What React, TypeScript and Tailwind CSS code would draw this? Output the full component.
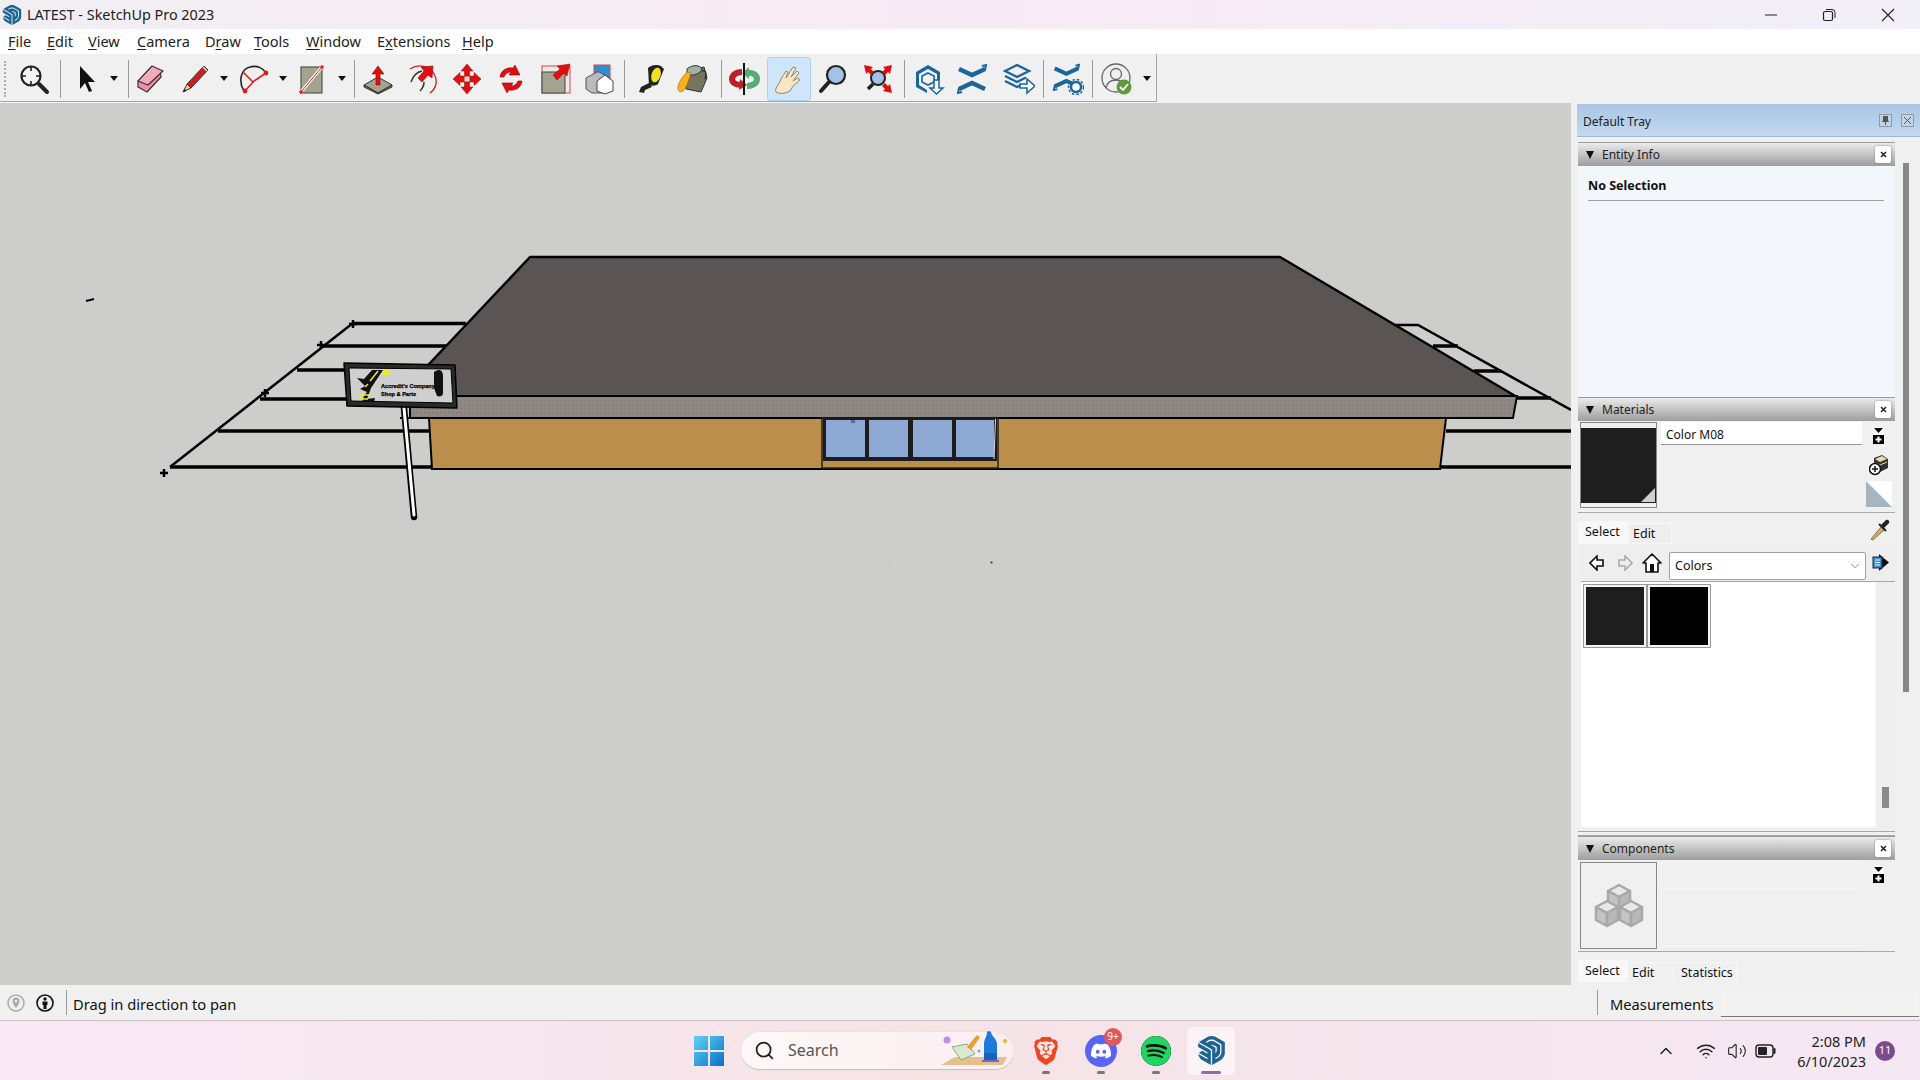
import React from "react";
import { SiBrave, SiDiscord, SiSpotify, SiSketchup } from "react-icons/si";
import { Search, ChevronDown, ChevronUp, Wifi, Volume2 } from "lucide-react";

const Ico = ({ c = "", children, w = 32 }: { c?: string; children: React.ReactNode; w?: number }) => (
  <svg width={w} height="32" viewBox={`0 0 ${w} 32`} className={`shrink-0 ${c}`}>{children}</svg>
);
const Sep = ({ c }: { c: string }) => <div className={`w-px h-[38px] bg-[#9a9a9a] shrink-0 ${c}`} />;
const Dd = ({ c }: { c: string }) => (
  <svg width="8" height="5" viewBox="0 0 8 5" className={`shrink-0 ${c}`}><path d="M0 0h8L4 5z" fill="#111" /></svg>
);
const Menu = ({ k, rest, pre = "", c }: { k: string; rest: string; pre?: string; c: string }) => (
  <span className={c}>{pre}<span className="underline underline-offset-2">{k}</span>{rest}</span>
);
const Close = () => (
  <div className="w-[16px] h-[17px] bg-white rounded-[2px] shadow-[0_0_2px_#777] flex items-center justify-center mr-[4px]">
    <svg width="7" height="7" viewBox="0 0 7 7"><path d="M1 1l5 5M6 1L1 6" stroke="#222" strokeWidth="1.5" /></svg>
  </div>
);
const PanelHead = ({ t }: { t: string }) => (
  <div className="h-[24px] shrink-0 border-t border-[#9a9a9a] bg-gradient-to-b from-[#ececec] to-[#9e9e9e] flex items-center justify-between pl-[8px]">
    <div className="flex items-center">
      <svg width="8" height="8" viewBox="0 0 8 8"><path d="M0 0h8L4 8z" fill="#111" /></svg>
      <span className="ml-[8px] text-[12px] text-[#222]">{t}</span>
    </div>
    <Close />
  </div>
);
const AddIcon = ({ c }: { c: string }) => (
  <svg width="11" height="17" viewBox="0 0 11 17" className={c}>
    <rect width="11" height="17" fill="#fff" />
    <path d="M1 1h9L5.5 6z" fill="#000" />
    <rect y="8" width="11" height="9" fill="#000" />
    <path d="M5.5 9.5v6M2.5 12.5h6" stroke="#fff" strokeWidth="2" />
  </svg>
);
const Cube = ({ x, y }: { x: number; y: number }) => (
  <g transform={`translate(${x} ${y})`} stroke="#a8a8a8" strokeWidth="2.5" strokeLinejoin="round">
    <path d="M0 -12L11 -6L0 0L-11 -6Z" fill="#e8e8e8" />
    <path d="M-11 -6L0 0V13L-11 7Z" fill="#c4c4c4" />
    <path d="M11 -6L0 0V13L11 7Z" fill="#b8b8b8" />
  </g>
);
const Tab = ({ t, c }: { t: string; c: string }) => (
  <div className={`text-[12.500px] text-[#111] flex items-center ${c}`}>{t}</div>
);

const Chev = () => (
  <g fill="none" stroke="#1a659c" strokeWidth="4.500">
    <path d="M3 6l13 6 13-6" />
    <path d="M3 26l13-6 13 6" />
    <path d="M26 3l4-1-1 5M6 29l-4 1 1-5" strokeWidth="2" />
  </g>
);

const Toolbar = () => (
  <div className="h-[49px] bg-[#f0f0f0] shrink-0 flex">
    <div className="w-[1157px] h-[48px] pt-[2px] flex items-center border-r border-b border-[#a8a8a8]">
      <div className="w-[2px] h-[36px] ml-[4px] border-l-2 border-dotted border-[#aaa] shrink-0" />
      <Ico c="ml-[12px]"><circle cx="13" cy="13" r="9.5" fill="#f4f4f4" stroke="#222" strokeWidth="2.2" /><path d="M13 3v5M13 18v5M3 13h5M18 13h5" stroke="#222" strokeWidth="1.6" /><path d="M21 21l8 8" stroke="#222" strokeWidth="4" strokeLinecap="round" /></Ico>
      <Sep c="ml-[10px]" />
      <Ico c="ml-[8px]"><path d="M11 3v23l5-6 4 9 3-1-4-9h7z" fill="#111" /></Ico>
      <Dd c="ml-[9px]" />
      <Sep c="ml-[10px]" />
      <Ico c="ml-[5px]"><path d="M4 18v6l9 5 14-15-1-6z" fill="#f08fa6" stroke="#333" strokeWidth="1.200" strokeLinejoin="round" /><path d="M18 3l11 5-15 14L4 18z" fill="#f5aabb" stroke="#333" strokeWidth="1.200" strokeLinejoin="round" /></Ico>
      <Ico c="ml-[13px]"><path d="M8 21L25 3l4 4-17 18z" fill="#c8201e" stroke="#333" /><path d="M8 21l4 4-8 4z" fill="#e6c995" stroke="#333" /><path d="M4 29l2-3 1 2z" fill="#111" /><path d="M24 4l4 4" stroke="#eee" strokeWidth="1.2" /></Ico>
      <Dd c="ml-[9px]" />
      <Ico c="ml-[10px]"><path d="M6 28C0 18 3 6 12 4c7-2 13 1 16 6" fill="none" stroke="#222" strokeWidth="1.6" /><path d="M5 9l10 10M7 28L16 18 28 10" stroke="#d81e1e" strokeWidth="1.6" fill="none" /><circle cx="7" cy="28" r="2.4" fill="#e01b1b" /><circle cx="28" cy="10" r="2.4" fill="#e01b1b" /></Ico>
      <Dd c="ml-[9px]" />
      <Ico c="ml-[9px]"><rect x="5" y="4" width="21" height="26" fill="#a5a28e" stroke="#555" strokeWidth="1.2" /><path d="M5 29L26 4" stroke="#fff" strokeWidth="3" /><path d="M5 29L26 4" stroke="#d81e1e" strokeWidth="1" /><circle cx="5" cy="29" r="1.8" fill="#e01b1b" /><circle cx="26" cy="4" r="1.8" fill="#e01b1b" /></Ico>
      <Dd c="ml-[10px]" />
      <Sep c="ml-[8px]" />
      <Ico c="ml-[7px]"><path d="M2 22L16 14l14 8-14 8z" fill="#a5a28e" stroke="#333" /><path d="M2 22v2l14 7 14-7v-2l-14 8z" fill="#6e6c5c" stroke="#333" /><path d="M16 3l6 8h-4v11h-4V11h-4z" fill="#e00f0f" stroke="#8a0c0c" strokeWidth=".6" /></Ico>
      <Ico c="ml-[13px]"><path d="M3 6C12 0 26 3 29 16c1 6-2 11-6 14" fill="none" stroke="#d81e1e" strokeWidth="1.3" /><path d="M4 19C6 13 10 9 15 8M13 28c3-3 4-6 4-9" fill="none" stroke="#333" strokeWidth="1.5" /><path d="M26 3l-1 12-4-3-6 7-4-4 6-7-3-4z" fill="#e00f0f" stroke="#8a0c0c" strokeWidth=".6" /></Ico>
      <Ico c="ml-[12px]"><path d="M16 1l6 7h-3.500v5H23V9.500l7 6.500-7 6.500V19h-4.500v5H22l-6 7-6-7h3.500v-5H9v3.500L2 16l7-6.500V13h4.500V8H10z" fill="#e00f0f" stroke="#8a0c0c" strokeWidth=".5" /><rect x="13.500" y="13.500" width="5" height="5" fill="#ddd" /></Ico>
      <Ico c="ml-[12px]"><path d="M5 14C6 7 12 4 18 5l2-3 5 10-11 0 2-3c-3 0-6 2-7 5zM27 18c-1 7-7 10-13 9l-2 3-5-10 11 0-2 3c3 0 6-2 7-5z" fill="#e00f0f" stroke="#8a0c0c" strokeWidth=".6" /></Ico>
      <Ico c="ml-[12px]"><rect x="3" y="3" width="28" height="27" fill="#f4e6e6" stroke="#d54a4a" /><rect x="3" y="9" width="23" height="21" fill="#a5a28e" stroke="#444" /><path d="M31 1l-3 12-3-3-7 7-4-5 7-6-3-3z" fill="#e00f0f" stroke="#8a0c0c" strokeWidth=".5" /></Ico>
      <Ico c="ml-[12px]"><rect x="11" y="2" width="16" height="14" fill="#2f8fd0" stroke="#d54a4a" /><path d="M3 15l11-6 2 0 11 6v11l-8 4H9l-6-4z" fill="#bbb" stroke="#555" /><path d="M14 18l8-6 8 6v10l-8 3-8-3z" fill="#fff" stroke="#444" /></Ico>
      <Sep c="ml-[9px]" />
      <Ico c="ml-[9px]"><path d="M14 5c3-3 9-4 13-2l3 3-6 15c-2 2-6 2-9 1z" fill="#222" /><ellipse cx="22" cy="12" rx="4.500" ry="7.500" transform="rotate(18 22 12)" fill="#f0e020" /><path d="M15 20L7 24l-2 5 5 1 1-3 7-3z" fill="#222" /></Ico>
      <Ico c="ml-[10px]"><path d="M13 7L28 4l3 11-6 14-15-3-1-12z" fill="#77745c" stroke="#333" /><path d="M11 6c6-5 13-4 15 0-2 5-8 7-15 6z" fill="#9fb0a8" stroke="#333" /><path d="M11 9c-3 3-8 9-9 14s2 7 5 5 5-9 8-18z" fill="#f5b21a" stroke="#a06d10" strokeWidth=".6" /><path d="M26 8c4-1 5 3 3 8" fill="none" stroke="#333" strokeWidth="1.500" /></Ico>
      <Sep c="ml-[13px]" />
      <Ico c="ml-[6px]"><path d="M14 9C7 9 4 13 4 16s3 6 9 6" fill="none" stroke="#b82228" strokeWidth="6" /><path d="M12 16l7 6-8 5z" fill="#b82228" /><path d="M18 10c7-1 11 2 11 6s-4 7-10 7" fill="none" stroke="#55ad74" strokeWidth="6" /><path d="M21 4l-7 6 7 6z" fill="#55ad74" /><path d="M16 0v32" stroke="#111" strokeWidth="2" /></Ico>
      <div className="w-[44px] h-[44px] ml-[7px] bg-[#cfe6fa] border border-[#a9d1f2] rounded-[3px] flex items-center justify-center shrink-0">
        <Ico><path d="M3 29C1 26 6 22 8 16l5-8 2 1-2 6 7-11 3 1-5 9 6-6 2 2-6 8 5-3 2 2-7 6-3 5c-5 3-11 3-14 1z" fill="#f6e6c2" stroke="#94876c" strokeWidth="1" strokeLinejoin="round" /></Ico>
      </div>
      <Ico c="ml-[6px]"><circle cx="19" cy="12" r="9" fill="#a3c2e6" stroke="#222" strokeWidth="2.2" /><path d="M12 19L4 28" stroke="#222" strokeWidth="4" strokeLinecap="round" /></Ico>
      <Ico c="ml-[13px]"><circle cx="16" cy="15" r="7" fill="#a3c2e6" stroke="#222" strokeWidth="2" /><path d="M11 21L6 26" stroke="#222" strokeWidth="3.500" /><path d="M2 2l9 2-2 2 3 3-3 3-3-3-2 2zM30 2l-2 9-2-2-3 3-3-3 3-3-2-2zM30 30l-9-2 2-2-3-3 3-3 3 3 2-2z" fill="#dd1111" /></Ico>
      <Sep c="ml-[10px]" />
      <Ico c="ml-[8px]"><path d="M15 2l12 7v8l-3 0v-6l-9-5-9 5v11l8 5v3L3 24V9z" fill="#1a659c" /><path d="M15 10l6 3v6l-6 3-6-3v-6z" fill="none" stroke="#1a659c" strokeWidth="1.600" /><path d="M21 17h5v8h4l-6.500 6L17 25h4z" fill="#fff" stroke="#1a659c" strokeWidth="1.500" /></Ico>
      <Ico c="ml-[11px]"><Chev /></Ico>
      <Ico c="ml-[15px]"><path d="M14 2L26 8l-12 6L2 8z" fill="none" stroke="#1a659c" strokeWidth="2.400" /><path d="M2 13l12 6 9-4.500M2 18l12 6 4-2" fill="none" stroke="#1a659c" strokeWidth="2.400" /><path d="M17 21h7v-5l8 7-8 7v-5h-7z" fill="#fff" stroke="#1a659c" strokeWidth="1.600" /></Ico>
      <Sep c="ml-[8px]" />
      <Ico c="ml-[8px]"><g transform="scale(.9)"><Chev /></g><circle cx="24" cy="24" r="5" fill="#fff" stroke="#1a659c" strokeWidth="2.500" /><circle cx="24" cy="24" r="7.500" fill="none" stroke="#1a659c" strokeWidth="1.400" strokeDasharray="2.500 2" /></Ico>
      <Sep c="ml-[8px]" />
      <Ico w={36} c="ml-[7px]"><circle cx="16" cy="15" r="14" fill="none" stroke="#666" strokeWidth="1.300" /><circle cx="16" cy="11" r="5.500" fill="none" stroke="#666" strokeWidth="1.300" /><path d="M6 25c1-6 5-8 10-8s8 2 10 7" fill="none" stroke="#666" strokeWidth="1.300" /><circle cx="24" cy="24" r="7.500" fill="#5c9a3d" /><path d="M20 24l3 3 5-6" fill="none" stroke="#fff" strokeWidth="1.800" /></Ico>
      <Dd c="ml-[7px]" />
    </div>
  </div>
);

const Scene = () => (
  <svg width="1571" height="882" viewBox="0 103 1571 882" className="block">
    <defs>
      <pattern id="fas" width="4" height="4" patternUnits="userSpaceOnUse">
        <rect width="4" height="4" fill="#8f8784" />
        <rect width="2" height="2" fill="#898180" />
        <rect x="2" y="2" width="1" height="1" fill="#9b9491" />
      </pattern>
    </defs>
    <rect x="0" y="103" width="1571" height="882" fill="#cdcdcb" />
    <g stroke="#000" fill="none" strokeLinecap="butt">
      <path d="M170 467L353 323" strokeWidth="2.500" />
      <path d="M353 323.500H466M322 346H446M297 370H350M260 399H350M218 431H432M170 467H432" strokeWidth="3.500" />
      <path d="M1395 325H1418L1571 410" strokeWidth="2.500" />
      <path d="M1433 346H1458M1474 371H1501M1517 398H1551M1446 431H1571M1440 467H1571" strokeWidth="3.500" />
      <path d="M160 473h8M164 469v8M317 345h8M321 341v8M261 393h8M265 389v8M349 324h8M353 320v8" strokeWidth="2.500" />
      <path d="M86 301l8-2" strokeWidth="2" />
    </g>
    <path d="M429 418H1446L1440 469H432Z" fill="#bb8f4b" stroke="#000" strokeWidth="2" />
    <path d="M530 257H1280L1517 397H398Z" fill="#5a5552" stroke="#000" strokeWidth="2.500" strokeLinejoin="round" />
    <path d="M410 396H1517L1513 418H410Z" fill="url(#fas)" stroke="#000" strokeWidth="2" />
    <path d="M400 418H1513" stroke="#000" strokeWidth="2" />
    <rect x="822" y="418" width="176" height="50" fill="#bb8f4b" stroke="#222" strokeWidth="1.500" />
    <rect x="823" y="418" width="174" height="43" fill="#1c1c1c" />
    <rect x="826" y="420" width="39" height="37" fill="#8ea8d4" />
    <rect x="869" y="420" width="39" height="37" fill="#8ea8d4" />
    <rect x="913" y="420" width="39" height="37" fill="#8ea8d4" />
    <rect x="956" y="420" width="38" height="37" fill="#8ea8d4" />
    <rect x="851" y="420" width="4" height="3" fill="#4f6f9c" />
    <path d="M995.500 419l-1.500 40" stroke="#ddd" strokeWidth="1" />
    <path d="M404 408L414 517" stroke="#000" strokeWidth="6.500" strokeLinecap="round" />
    <path d="M404 408L414 515" stroke="#fff" strokeWidth="3" strokeLinecap="round" />
    <path d="M344 363L455 365L457 408L347 406Z" fill="#2a2a2a" stroke="#000" strokeWidth="1.500" strokeLinejoin="round" />
    <path d="M349 368L451 369L453 403L351 401Z" fill="#cfcfcf" stroke="#000" strokeWidth="1" />
    <path d="M357 378l7 1 8-9 6 0-8 9 8-9h5l-12 18-4 11 8-1-1 4h-12l2-6 3-4-7-3 5-3z" fill="#111" />
    <path d="M370 381l8-10M368 384l-3 3M360 395h11M360 399h8" stroke="#ecec20" strokeWidth="1.500" />
    <path d="M384 370h6l-2 5h-6z" fill="#ecec20" />
    <path d="M434 372c5-4 9-2 9 4v17c0 3-3 4-6 3l-3-8z" fill="#111" />
    <g fontSize="5.600" fontWeight="700" fontFamily="Liberation Sans, sans-serif" fill="#000" stroke="#000" strokeWidth=".25">
      <text x="381" y="388">Accredit's Company</text>
      <text x="381" y="396">Shop &amp; Parts</text>
    </g>
    <rect x="990.500" y="561.500" width="2" height="2" fill="#444" />
    <rect x="888" y="561.500" width="1" height="1" fill="#aaa" />
  </svg>
);

const Tray = () => (
  <div className="w-[349px] h-[882px] bg-[#f0f0f0] pl-[6px] pt-[1px] flex flex-col shrink-0" >
    <div className="h-[33px] shrink-0 bg-gradient-to-b from-[#a9c6e4] to-[#c3d9ef] border-b border-[#9fb6cc] flex items-center justify-between pl-[6px] pr-[6px]">
      <span className="text-[12px] text-[#222] pt-[4px]">Default Tray</span>
      <div className="flex gap-[9px] pt-[1px]">
        <div className="w-[13px] h-[13px] bg-[#c3d3e4] border border-[#8a9aaa] flex items-center justify-center"><svg width="7" height="9" viewBox="0 0 7 9"><path d="M1 0h5v5h1v1H4v3H3V6H0V5h1z" fill="#555" /></svg></div>
        <div className="w-[13px] h-[13px] bg-[#c3d3e4] border border-[#8a9aaa] flex items-center justify-center"><svg width="9" height="9" viewBox="0 0 9 9"><path d="M1 1l7 7M8 1L1 8" stroke="#555" strokeWidth="1" /></svg></div>
      </div>
    </div>
    <div className="flex flex-1 pt-[5px] pl-[1px] min-h-0">
      <div className="w-[317px] flex flex-col">
        <PanelHead t="Entity Info" />
        <div className="h-[231px] bg-[#f3f6fb] px-[10px] pt-[10px] shrink-0">
          <div className="text-[12.500px] font-bold text-[#111] leading-[20px] border-b border-[#a0a0a0] h-[25px] w-[296px]">No Selection</div>
        </div>
        <PanelHead t="Materials" />
        <div className="h-[92px] shrink-0 border-b border-[#a8a8a8] flex pl-[2px] pt-[1px]">
          <div className="w-[77px] h-[86px] border border-[#888] bg-[#efefef] pt-[5px] shrink-0">
            <div className="h-[75px] bg-[#1e1e1e] relative">
              <svg width="14" height="14" viewBox="0 0 14 14" className="absolute right-[1px] bottom-[1px]"><path d="M14 0V14H0Z" fill="#d0d0d0" /></svg>
            </div>
          </div>
          <div className="w-[201px] h-[23px] ml-[4px] bg-white border-b border-[#999] text-[12px] text-[#111] pl-[5px] leading-[25px] shrink-0">Color M08</div>
          <div className="flex flex-col items-center w-[33px] shrink-0">
            <AddIcon c="mt-[5px]" />
            <svg width="20" height="22" viewBox="0 0 20 22" className="mt-[10px]"><path d="M5 4L13 1l6 4v9l-8 4-6-4z" fill="#333" /><path d="M6 5l7-3 5 3-7 3z" fill="#e6dcaa" /><path d="M6 9l5 2 7-3" stroke="#e6dcaa" fill="none" /><circle cx="6" cy="15" r="5.500" fill="#fff" stroke="#111" strokeWidth="1.500" /><path d="M6 12v6M3 15h6" stroke="#111" strokeWidth="1.500" /></svg>
            <svg width="26" height="26" viewBox="0 0 26 26" className="mt-[5px]"><rect width="26" height="26" fill="#fff" /><path d="M0 0L26 26H0Z" fill="#a6b5c2" /></svg>
          </div>
        </div>
        <div className="h-[31px] shrink-0 flex items-end relative">
          <Tab t="Select" c="w-[50px] h-[23px] bg-[#f8f8f8] pl-[7px]" />
          <Tab t="Edit" c="w-[44px] h-[21px] bg-[#eeeeee] border border-[#f7f7f7] pl-[4px] pt-[2px]" />
          <svg width="22" height="22" viewBox="0 0 22 22" className="absolute right-[4px] top-[6px]"><path d="M2 20L13 7l3 3L4 21z" fill="#e0b04a" stroke="#555" strokeWidth=".8" /><path d="M12 6l5-5c2-1 4 1 3 3l-5 5z" fill="#222" /><path d="M10 5l7 7" stroke="#222" strokeWidth="2" /></svg>
        </div>
        <div className="h-[38px] shrink-0 ml-[3px] flex items-center border-b border-[#a8a8a8] bg-[#eeeeee]">
          <svg width="16" height="16" viewBox="0 0 16 16" className="ml-[8px] shrink-0"><path d="M8 1L1 8l7 7v-4h6V5H8z" fill="#fff" stroke="#111" strokeWidth="1.600" /></svg>
          <svg width="16" height="16" viewBox="0 0 16 16" className="ml-[12px] shrink-0"><path d="M8 1l7 7-7 7v-4H2V5h6z" fill="#eee" stroke="#aaa" strokeWidth="1.600" /></svg>
          <svg width="20" height="20" viewBox="0 0 20 20" className="ml-[9px] shrink-0"><path d="M10 1L1 10h3v9h12v-9h3z" fill="#fff" stroke="#111" strokeWidth="1.600" strokeLinejoin="round" /><rect x="8" y="11" width="4" height="8" fill="#111" /></svg>
          <div className="w-[197px] h-[28px] ml-[7px] mt-[7px] bg-white border border-[#a0a0a0] rounded-[2px] flex items-center justify-between pl-[5px] pr-[3px] text-[12.500px] text-[#111] shrink-0">
            <span>Colors</span><ChevronDown size={14} strokeWidth={1} color="#444" />
          </div>
          <svg width="17" height="17" viewBox="0 0 17 17" className="ml-[6px] shrink-0"><path d="M7 0l10 8.500L7 17z" fill="#111" /><rect x="1" y="3" width="9" height="11" fill="#3d8fd4" stroke="#223" /><path d="M3 6h5M3 8.500h5M3 11h5" stroke="#dfe" /></svg>
        </div>
        <div className="h-[245px] shrink-0 flex ml-[3px]">
          <div className="w-[295px] bg-white pl-[3px] pt-[3px] flex items-start gap-[2px]">
            <div className="w-[62px] h-[62px] bg-[#1e1e1e] border-2 border-[#f5f5f5] outline outline-[#999]" />
            <div className="w-[62px] h-[62px] bg-black border-2 border-[#f5f5f5] outline outline-[#999]" />
          </div>
          <div className="flex-1 relative bg-[#eeeeee]">
            <div className="absolute left-[6px] top-[205px] w-[7px] h-[21px] bg-[#8a8a8a]" />
          </div>
        </div>
        <div className="h-[5px] shrink-0 border-b border-t border-[#a8a8a8] mt-[4px]" />
        <PanelHead t="Components" />
        <div className="h-[92px] shrink-0 border-b border-[#a8a8a8] flex pl-[2px] pt-[2px]">
          <div className="w-[77px] h-[87px] border border-[#888] shrink-0 flex items-center justify-center">
            <svg width="50" height="50" viewBox="0 0 50 50"><Cube x={25} y={16} /><Cube x={13} y={32} /><Cube x={37} y={32} /></svg>
          </div>
          <div className="ml-[4px] w-[201px] shrink-0 flex flex-col gap-[4px]">
            <div className="h-[22px] border border-[#f6f6f6]" />
            <div className="h-[59px] border border-[#f6f6f6]" />
          </div>
          <div className="w-[33px] flex justify-center"><AddIcon c="mt-[4px]" /></div>
        </div>
        <div className="h-[31px] shrink-0 flex items-end pb-[1px]">
          <Tab t="Select" c="w-[50px] h-[22px] bg-[#f8f8f8] pl-[7px]" />
          <Tab t="Edit" c="w-[46px] h-[20px] pl-[4px] pt-[2px] border-r border-t border-[#f7f7f7]" />
          <Tab t="Statistics" c="w-[63px] h-[20px] pl-[7px] pt-[2px] border-r border-t border-[#f7f7f7]" />
        </div>
      </div>
      <div className="flex-1 relative">
        <div className="absolute left-[8px] top-[21px] w-[6px] h-[529px] bg-[#888888]" />
      </div>
    </div>
  </div>
);

const StatusBar = () => (
  <div className="h-[35px] shrink-0 bg-[#f0f0f0] flex items-center text-[14.700px] text-[#111]">
    <svg width="18" height="18" viewBox="0 0 18 18" className="ml-[7px] shrink-0"><circle cx="9" cy="9" r="8" fill="none" stroke="#aaa" strokeWidth="1.500" /><path d="M9 3.500a3.500 3.500 0 0 1 3.500 3.500C12.500 10 9 14 9 14S5.500 10 5.500 7A3.500 3.500 0 0 1 9 3.500z" fill="#aaa" /><circle cx="9" cy="7" r="1.300" fill="#f0f0f0" /></svg>
    <svg width="18" height="18" viewBox="0 0 18 18" className="ml-[11px] shrink-0"><circle cx="9" cy="9" r="8" fill="none" stroke="#111" strokeWidth="1.600" /><circle cx="9" cy="5" r="1.700" fill="#111" /><path d="M6.500 7.500h5v3.500h-1v4h-3v-4h-1z" fill="#111" /></svg>
    <div className="w-px h-[25px] bg-[#9a9a9a] ml-[12px] shrink-0" />
    <span className="ml-[6px] pt-[3px] w-[1524px] shrink-0">Drag in direction to pan</span>
    <div className="w-px h-[25px] bg-[#9a9a9a] shrink-0" />
    <span className="ml-[12px] pt-[3px] w-[111px] shrink-0">Measurements</span>
    <div className="w-[198px] h-[28px] bg-[#f2f2f2] border-b border-[#777] shrink-0" />
  </div>
);

const Taskbar = () => (
  <div className="h-[60px] shrink-0 bg-gradient-to-r from-[#f9e9f6] via-[#f5e3e6] to-[#f5e8f4] border-t border-[#cdbfc2] flex items-center relative text-[#222]">
    <svg width="30" height="30" viewBox="0 0 30 30" className="ml-[694px] shrink-0"><defs><linearGradient id="win" x1="0" y1="0" x2="1" y2="1"><stop offset="0" stopColor="#5fd3f3" /><stop offset="1" stopColor="#0a6fc9" /></linearGradient></defs><path d="M0 0h14v14H0zM16 0h14v14H16zM0 16h14v14H0zM16 16h14v14H16z" fill="url(#win)" /></svg>
    <div className="w-[273px] h-[38px] ml-[17px] rounded-full bg-gradient-to-r from-[#fdf8f7] to-[#fbeef0] border-b border-[#ccc0c0] shadow-[0_0_1px_#bbb] flex items-center relative shrink-0">
      <Search size={21} strokeWidth={2} className="ml-[13px] text-[#222]" />
      <span className="ml-[13px] text-[16px] text-[#555]">Search</span>
      <svg width="70" height="42" viewBox="0 0 70 42" className="absolute right-[3px] bottom-0">
        <circle cx="6" cy="13" r="3.500" fill="#c58be6" /><circle cx="38" cy="24" r="1.500" fill="#4cb8e0" /><circle cx="64" cy="14" r="2" fill="#f5b21a" />
        <path d="M0 38L14 30H66L62 38Z" fill="#e6c08c" />
        <path d="M11 20L26 17L34 27L20 33Z" fill="#d9ead3" stroke="#6a9a6a" strokeWidth=".8" />
        <path d="M26 20L36 8l3 2-9 13z" fill="#f59a2a" />
        <path d="M43 34V17c0-5 3-7 3-12 0-1 4-1 4 0 1 5 6 7 6 12v17z" fill="#1f7bd8" /><rect x="43" y="26" width="13" height="8" fill="#1464b8" /><rect x="41" y="33" width="17" height="2" fill="#8060d0" />
      </svg>
    </div>
    <div className="w-[32px] h-[32px] ml-[16px] flex justify-center items-center shrink-0"><SiBrave size={28} color="#f0451f" /></div>
    <div className="w-[32px] h-[32px] ml-[23px] rounded-full bg-[#5865f2] flex items-center justify-center relative shrink-0">
      <SiDiscord size={20} color="#fff" />
      <div className="absolute -top-[7px] -right-[5px] w-[18px] h-[18px] rounded-full bg-[#e0585c] text-white text-[10px] flex items-center justify-center">9+</div>
    </div>
    <div className="w-[32px] h-[32px] ml-[23px] flex items-center justify-center shrink-0"><SiSpotify size={30} color="#1ed760" className="bg-[#111] rounded-full" /></div>
    <div className="w-[48px] h-[48px] ml-[15px] bg-[#fbf3f6] rounded-[5px] flex items-center justify-center relative shrink-0">
      <SiSketchup size={29} color="#1b6493" />
      <div className="absolute bottom-[1px] left-[14px] w-[20px] h-[3px] rounded-full bg-[#9a68a8]" />
    </div>
    <div className="absolute left-[1042px] bottom-[6px] w-[8px] h-[3px] rounded-full bg-[#777]" />
    <div className="absolute left-[1097px] bottom-[6px] w-[8px] h-[3px] rounded-full bg-[#777]" />
    <div className="absolute left-[1152px] bottom-[6px] w-[8px] h-[3px] rounded-full bg-[#777]" />
    <ChevronUp size={20} strokeWidth={1.800} className="ml-[421px] shrink-0" />
    <Wifi size={20} strokeWidth={1.800} className="ml-[20px] shrink-0" />
    <Volume2 size={20} strokeWidth={1.300} className="ml-[11px] shrink-0" />
    <svg width="22" height="14" viewBox="0 0 22 14" className="ml-[8px] shrink-0"><rect x="1" y="1" width="17" height="12" rx="3" fill="none" stroke="#222" strokeWidth="1.400" /><rect x="3" y="3" width="9" height="8" rx="1" fill="#222" /><path d="M19.500 5v4" stroke="#222" strokeWidth="2" strokeLinecap="round" /></svg>
    <div className="w-[80px] ml-[9px] text-right text-[14.500px] leading-[20px] shrink-0"><div>2:08 PM</div><div>6/10/2023</div></div>
    <div className="w-[20px] h-[20px] ml-[9px] rounded-full bg-[#7b4a8f] text-white text-[11px] flex items-center justify-center shrink-0">11</div>
  </div>
);

export default function App() {
  return (
    <div className="w-[1920px] h-[1080px] overflow-hidden flex flex-col bg-[#f0f0f0] [font-family:'Noto_Sans',sans-serif]">
      <div className="h-[29px] shrink-0 bg-gradient-to-r from-[#f1eff3] via-[#f8eaf4] to-[#f1eff8] flex items-center text-[14.400px] text-[#222]">
        <SiSketchup size={20} color="#1b6493" className="ml-[2px]" />
        <span className="ml-[5px]">LATEST - SketchUp Pro 2023</span>
        <svg width="14" height="2" viewBox="0 0 14 2" className="ml-auto"><path d="M1 1h12" stroke="#222" /></svg>
        <svg width="14" height="14" viewBox="0 0 14 14" className="ml-[44px]"><rect x="1.500" y="3.500" width="9" height="9" rx="1.500" fill="none" stroke="#222" strokeWidth="1.200" /><path d="M4 1.500h6a3 3 0 0 1 3 3V10" fill="none" stroke="#222" /></svg>
        <svg width="14" height="14" viewBox="0 0 14 14" className="ml-[45px] mr-[25px]"><path d="M1 1l12 12M13 1L1 13" stroke="#222" strokeWidth="1.100" /></svg>
      </div>
      <div className="h-[25px] shrink-0 bg-white flex items-center text-[14.500px] text-[#222] pl-[8px]">
        <Menu k="F" rest="ile" c="w-[39px]" />
        <Menu k="E" rest="dit" c="w-[41px]" />
        <Menu k="V" rest="iew" c="w-[49px]" />
        <Menu k="C" rest="amera" c="w-[68px]" />
        <Menu pre="D" k="r" rest="aw" c="w-[49px]" />
        <Menu k="T" rest="ools" c="w-[52px]" />
        <Menu k="W" rest="indow" c="w-[71px]" />
        <Menu pre="E" k="x" rest="tensions" c="w-[85px]" />
        <Menu k="H" rest="elp" c="w-[40px]" />
      </div>
      <Toolbar />
      <div className="flex h-[882px] shrink-0">
        <Scene />
        <Tray />
      </div>
      <StatusBar />
      <Taskbar />
    </div>
  );
}
